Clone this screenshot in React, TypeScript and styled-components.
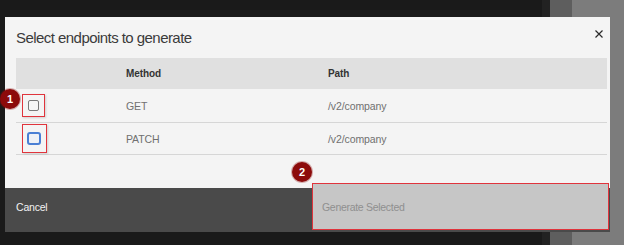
import React from "react";
import styled, { createGlobalStyle } from "styled-components";

const GlobalStyle = createGlobalStyle`
  html, body { margin: 0; height: 245px; overflow: hidden; }
  body {
    background: linear-gradient(to right, #1a1a1a 0 542px, #222 542px 550px, #5e5e5e 550px 572px, #7c7c7c 572px);
    font-family: "Liberation Sans", Arial, sans-serif;
  }
`;

const Page = styled.div`
  padding: 17px 0 0 5px;
`;

const Modal = styled.section`
  position: relative;
  width: 605px;
  height: 215px;
  background: #f4f4f4;
  display: flex;
  flex-direction: column;
`;

const Header = styled.header`
  display: flex;
  justify-content: space-between;
  align-items: flex-start;
  height: 41px;
  box-sizing: border-box;
  padding: 11px 5px 0 11px;
`;

const Title = styled.h2`
  margin: 0;
  font-size: 15px;
  line-height: 20px;
  font-weight: 400;
  color: #3b3b3b;
  letter-spacing: -0.55px;
`;

const Close = styled.button`
  border: 0;
  background: none;
  padding: 0;
  width: 12px;
  height: 12px;
  display: flex;
  align-items: center;
  justify-content: center;
  color: #2a2a2a;
`;

const Table = styled.div`
  margin: 0 3px 0 11px;
`;

const Row = styled.div<{ $head?: boolean; $h: number }>`
  display: grid;
  grid-template-columns: 94px 202px 1fr;
  align-items: center;
  height: ${(p) => p.$h}px;
  box-sizing: border-box;
  background: ${(p) => (p.$head ? "#e0e0e0" : "transparent")};
  border-bottom: ${(p) => (p.$head ? "none" : "1px solid #d6d6d6")};
`;

const HeadCell = styled.div`
  padding-left: 16px;
  font-size: 10px;
  font-weight: 700;
  color: #333;
  letter-spacing: -0.1px;
`;

const Cell = styled.div`
  padding-left: 16px;
  font-size: 10.5px;
  color: #707070;
  letter-spacing: -0.1px;
`;

const CheckCell = styled.div`
  padding-left: 12px;
  display: flex;
  align-items: center;
`;

const Marked = styled.span<{ $x: number; $y: number }>`
  position: relative;
  display: inline-flex;
  &::after {
    content: "";
    position: absolute;
    left: -${(p) => p.$x}px;
    right: -${(p) => p.$x}px;
    top: -${(p) => p.$y}px;
    bottom: -${(p) => p.$y}px;
    border: 1.5px solid #e0343c;
    box-shadow: 1px 1px 2px rgba(0, 0, 0, 0.15);
  }
`;

const Checkbox = styled.span<{ $focus?: boolean }>`
  display: inline-block;
  box-sizing: border-box;
  width: ${(p) => (p.$focus ? 14 : 11)}px;
  height: ${(p) => (p.$focus ? 13 : 11)}px;
  margin-left: ${(p) => (p.$focus ? -1 : 0)}px;
  border: ${(p) => (p.$focus ? "2px solid #4a7fd4" : "1px solid #7a7a7a")};
  border-radius: ${(p) => (p.$focus ? 3 : 2)}px;
  background: ${(p) => (p.$focus ? "#eef1f6" : "#f7f7f7")};
`;

const Footer = styled.footer`
  margin-top: auto;
  height: 44px;
  background: #4a4a4a;
  display: flex;
  align-items: flex-start;
`;

const CancelButton = styled.button`
  flex: 0 0 307px;
  height: 38px;
  border: 0;
  background: transparent;
  text-align: left;
  padding: 0 0 0 11px;
  font-family: inherit;
  font-size: 10.5px;
  color: #f2f2f2;
  letter-spacing: -0.2px;
`;

const GenerateButton = styled.button`
  position: relative;
  width: 297px;
  height: 47px;
  margin-top: -5px;
  border: 0;
  background: #c6c6c6;
  text-align: left;
  padding: 0 0 0 10px;
  font-family: inherit;
  font-size: 10.5px;
  color: #8f8f8f;
  letter-spacing: -0.3px;
  &::after {
    content: "";
    position: absolute;
    inset: 0;
    border: 1.5px solid #e0343c;
  }
`;

const Badge = styled.span<{ $left: number; $top: number }>`
  position: absolute;
  left: ${(p) => p.$left}px;
  top: ${(p) => p.$top}px;
  width: 20px;
  height: 20px;
  border-radius: 50%;
  background: #8c0b0b;
  color: #fff;
  font-size: 11px;
  font-weight: 700;
  display: flex;
  align-items: center;
  justify-content: center;
  box-shadow: 0 0 0 1px rgba(140, 11, 11, 0.3);
`;

const rows = [
  { method: "GET", path: "/v2/company", h: 34, focus: false, mx: 6, my: 6 },
  { method: "PATCH", path: "/v2/company", h: 32, focus: true, mx: 6, my: 8 },
];

export default function App() {
  return (
    <>
      <GlobalStyle />
      <Page>
        <Modal>
          <Header>
            <Title>Select endpoints to generate</Title>
            <Close aria-label="Close">
              <svg width="8" height="8" viewBox="0 0 8 8">
                <path d="M0.5 0.5 L7.5 7.5 M7.5 0.5 L0.5 7.5" stroke="currentColor" strokeWidth="1.2" />
              </svg>
            </Close>
          </Header>
          <Table>
            <Row $head $h={31}>
              <HeadCell />
              <HeadCell>Method</HeadCell>
              <HeadCell>Path</HeadCell>
            </Row>
            {rows.map((r) => (
              <Row key={r.method} $h={r.h}>
                <CheckCell>
                  <Marked $x={r.mx} $y={r.my}>
                    <Checkbox $focus={r.focus} />
                  </Marked>
                </CheckCell>
                <Cell>{r.method}</Cell>
                <Cell>{r.path}</Cell>
              </Row>
            ))}
          </Table>
          <Footer>
            <CancelButton>Cancel</CancelButton>
            <GenerateButton>Generate Selected</GenerateButton>
          </Footer>
          <Badge $left={-5} $top={72}>1</Badge>
          <Badge $left={287} $top={145}>2</Badge>
        </Modal>
      </Page>
    </>
  );
}
